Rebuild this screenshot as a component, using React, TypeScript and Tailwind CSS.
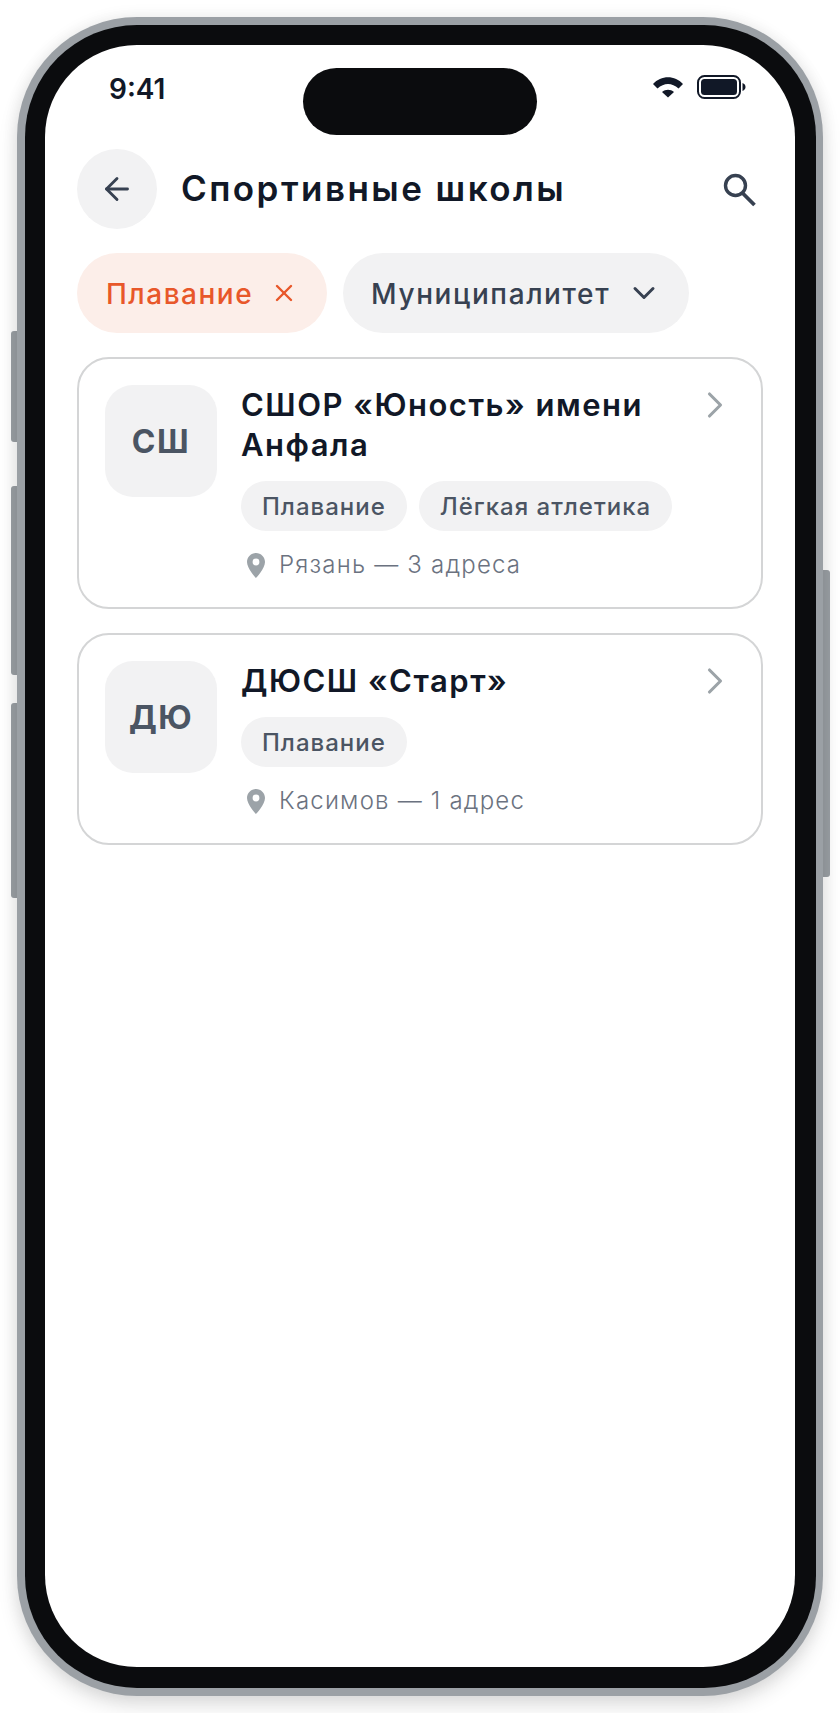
import { ArrowLeft, ChevronDown, ChevronRight, X } from 'lucide-react';

interface School {
  initials: string;
  name: string;
  tags: string[];
  location: string;
}

const schools: School[] = [
  {
    initials: 'СШ',
    name: 'СШОР «Юность» имени Анфала',
    tags: ['Плавание', 'Лёгкая атлетика'],
    location: 'Рязань — 3 адреса',
  },
  {
    initials: 'ДЮ',
    name: 'ДЮСШ «Старт»',
    tags: ['Плавание'],
    location: 'Касимов — 1 адрес',
  },
];

const WifiIcon = () => (
  <svg width="30" height="21" viewBox="0 0 30 21" fill="#111827">
    <path d="M0 7 C8 -2 22 -2 30 7 L25.5 11.5 C19 5.5 11 5.5 4.5 11.5 Z" />
    <path d="M9 15 C12.5 12 17.5 12 21 15 L15 20.5 Z" />
  </svg>
);

const BatteryIcon = () => (
  <svg width="49" height="24" viewBox="0 0 49 24" fill="none">
    <rect x="1" y="1" width="42" height="22" rx="6.5" stroke="#111827" strokeWidth="2" />
    <rect x="4" y="4" width="36" height="16" rx="3.5" fill="#111827" />
    <path d="M45.5 8 C47.5 8.8 48.5 10.2 48.5 12 C48.5 13.8 47.5 15.2 45.5 16 Z" fill="#111827" />
  </svg>
);

const SearchIcon = () => (
  <svg width="48" height="48" viewBox="0 0 48 48" fill="none" stroke="#374151" strokeWidth="3.4">
    <circle cx="20.5" cy="20.5" r="10" />
    <path d="M27.5 28 L39.5 40" strokeWidth="3.8" />
  </svg>
);

const PinIcon = () => (
  <svg width="18" height="25" viewBox="0 0 18 25" className="shrink-0">
    <path
      fillRule="evenodd"
      fill="#9ca3a8"
      d="M9 0 C4 0 0 4 0 9 C0 15.5 9 25 9 25 C9 25 18 15.5 18 9 C18 4 14 0 9 0 Z M9 12.4 A3.4 3.4 0 1 1 9 5.6 A3.4 3.4 0 1 1 9 12.4 Z"
    />
  </svg>
);

const SchoolCard = ({ school }: { school: School }) => (
  <div className="flex rounded-[32px] border-2 border-[#d4d5d6] bg-white px-[26px] pt-[26px] pb-[24px]">
    <div className="flex h-[112px] w-[112px] shrink-0 items-center justify-center rounded-[28px] bg-[#f2f2f3] pt-[2px] text-[32px] font-bold tracking-[1.5px] text-[#4b5563]">
      {school.initials}
    </div>
    <div className="ml-6 min-w-0 flex-1">
      <div className="w-[430px] text-[31px] leading-[40px] font-semibold tracking-[1.5px] text-[#111827]">
        {school.name}
      </div>
      <div className="mt-4 flex gap-3">
        {school.tags.map((tag) => (
          <span
            key={tag}
            className="flex h-[50px] items-center rounded-full bg-[#f2f2f3] px-[21px] pt-[2px] text-[24px] font-medium tracking-[1px] text-[#4b5563]"
          >
            {tag}
          </span>
        ))}
      </div>
      <div className="mt-4 ml-[6px] flex h-[36px] items-center gap-[14px] text-[24px] leading-[36px] font-light tracking-[1.2px] text-[#6b7280]">
        <PinIcon />
        {school.location}
      </div>
    </div>
    <ChevronRight
      size={44}
      strokeWidth={1.7}
      className="-mt-[2px] -mr-[2px] shrink-0 text-[#9ca3a8]"
    />
  </div>
);

const App = () => {
  return (
    <div className="relative h-[1713px] w-[840px] overflow-hidden bg-white pt-[17px] pl-[17px] font-['Inter',sans-serif]">
      {/* side buttons */}
      <div className="absolute top-[331px] left-[11px] h-[111px] w-[8px] rounded-l-[3px] bg-[#9ba0a5]" />
      <div className="absolute top-[486px] left-[11px] h-[189px] w-[8px] rounded-l-[3px] bg-[#9ba0a5]" />
      <div className="absolute top-[703px] left-[11px] h-[195px] w-[8px] rounded-l-[3px] bg-[#9ba0a5]" />
      <div className="absolute top-[570px] left-[821px] h-[307px] w-[9px] rounded-r-[3px] bg-[#9ba0a5]" />

      <div className="relative h-[1679px] w-[806px] rounded-[120px] bg-[#9ba0a5] pt-[8px] pl-[8px] shadow-[0_0_14px_3px_rgba(0,0,0,0.05),0_10px_20px_rgba(0,0,0,0.12)]">
        <div className="h-[1663px] w-[791px] rounded-[112px] bg-[#0b0c0e] pt-[20px] pl-[20px]">
          <div className="relative h-[1622px] w-[750px] overflow-hidden rounded-[92px] bg-white px-8">
            {/* dynamic island */}
            <div className="absolute top-[23px] left-[258px] h-[67px] w-[234px] rounded-full bg-[#0b0c0e]" />

            <div className="flex h-[104px] items-start justify-between pt-[30px]">
              <span className="ml-[32px] text-[28px] leading-[28px] font-semibold text-[#111827]">9:41</span>
              <div className="mr-[17px] flex items-center gap-[14px]">
                <WifiIcon />
                <BatteryIcon />
              </div>
            </div>

            <div className="flex items-center">
              <button className="flex h-[80px] w-[80px] items-center justify-center rounded-full bg-[#f2f2f3] text-[#374151]">
                <ArrowLeft size={36} strokeWidth={1.9} />
              </button>
              <h1 className="ml-[24px] flex-1 pb-[2px] text-[35px] font-semibold tracking-[2.45px] text-[#111827]">
                Спортивные школы
              </h1>
              <SearchIcon />
            </div>

            <div className="mt-6 flex gap-4">
              <div className="flex h-[80px] items-center gap-[17px] rounded-full bg-[#fceee9] pr-[29px] pl-[29px] text-[28px] font-medium tracking-[1.5px] text-[#e8572a]">
                <span className="pt-[2px]">Плавание</span>
                <X size={28} strokeWidth={2.1} />
              </div>
              <div className="flex h-[80px] items-center gap-[16px] rounded-full bg-[#f2f2f3] pr-[27px] pl-[28px] text-[28px] font-medium tracking-[1.6px] text-[#374151]">
                <span className="pt-[2px]">Муниципалитет</span>
                <ChevronDown size={36} strokeWidth={2} />
              </div>
            </div>

            <div className="mt-6 flex w-[686px] flex-col gap-6">
              {schools.map((school) => (
                <SchoolCard key={school.name} school={school} />
              ))}
            </div>
          </div>
        </div>
      </div>
    </div>
  );
};

export default App;
